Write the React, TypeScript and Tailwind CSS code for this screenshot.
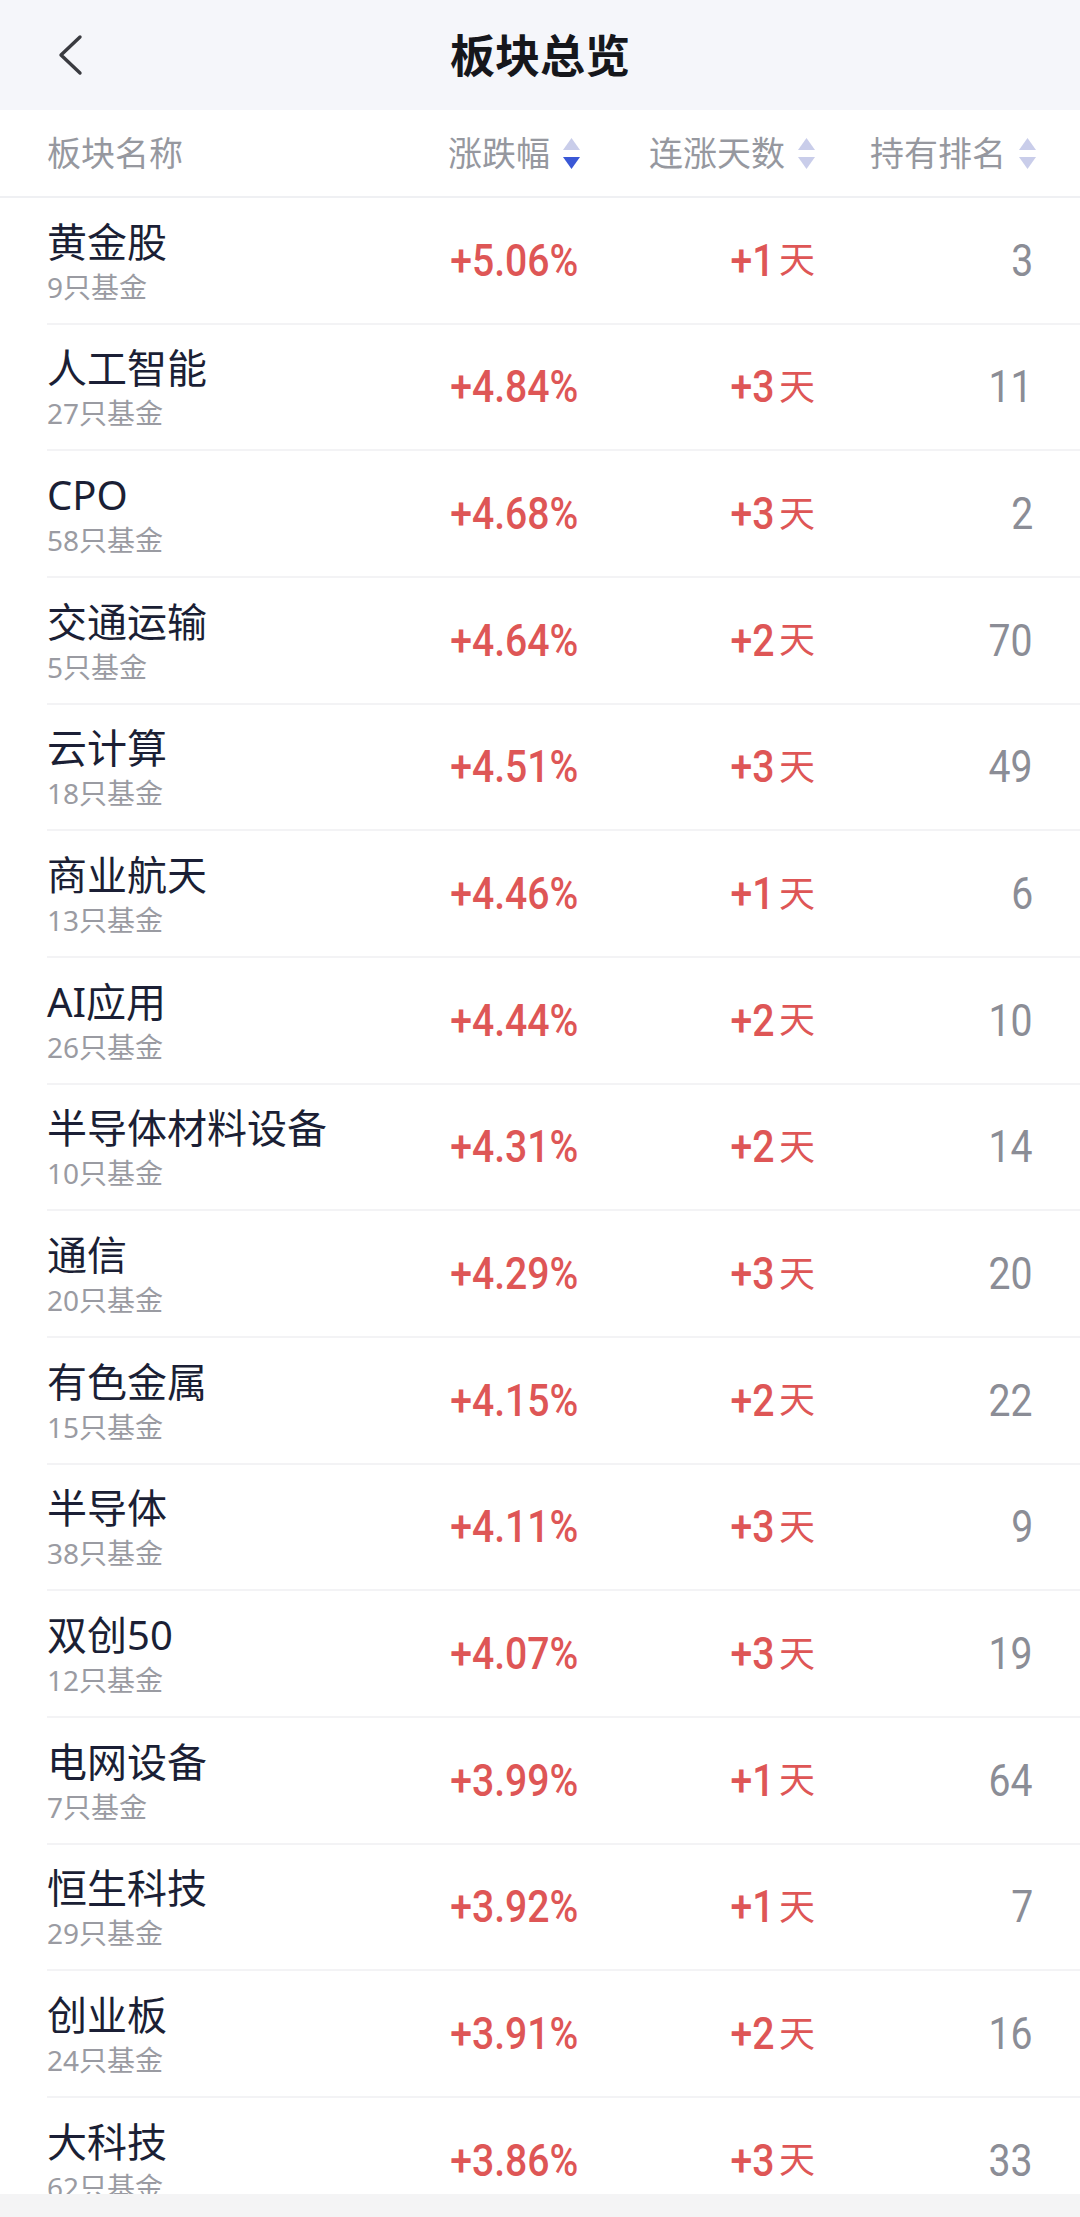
import React from "react";

type Row = { name: string; funds: number; pct: string; days: number; rank: number };

const rows: Row[] = [
  { name: "黄金股", funds: 9, pct: "+5.06%", days: 1, rank: 3 },
  { name: "人工智能", funds: 27, pct: "+4.84%", days: 3, rank: 11 },
  { name: "CPO", funds: 58, pct: "+4.68%", days: 3, rank: 2 },
  { name: "交通运输", funds: 5, pct: "+4.64%", days: 2, rank: 70 },
  { name: "云计算", funds: 18, pct: "+4.51%", days: 3, rank: 49 },
  { name: "商业航天", funds: 13, pct: "+4.46%", days: 1, rank: 6 },
  { name: "AI应用", funds: 26, pct: "+4.44%", days: 2, rank: 10 },
  { name: "半导体材料设备", funds: 10, pct: "+4.31%", days: 2, rank: 14 },
  { name: "通信", funds: 20, pct: "+4.29%", days: 3, rank: 20 },
  { name: "有色金属", funds: 15, pct: "+4.15%", days: 2, rank: 22 },
  { name: "半导体", funds: 38, pct: "+4.11%", days: 3, rank: 9 },
  { name: "双创50", funds: 12, pct: "+4.07%", days: 3, rank: 19 },
  { name: "电网设备", funds: 7, pct: "+3.99%", days: 1, rank: 64 },
  { name: "恒生科技", funds: 29, pct: "+3.92%", days: 1, rank: 7 },
  { name: "创业板", funds: 24, pct: "+3.91%", days: 2, rank: 16 },
  { name: "大科技", funds: 62, pct: "+3.86%", days: 3, rank: 33 },
];

const cjk = "font-['Noto_Sans','Noto_Sans_CJK_SC',sans-serif]";
const num = "font-['Roboto','Noto_Sans_CJK_SC',sans-serif]";

function SortArrows({ active }: { active?: "up" | "down" }) {
  return (
    <svg width="17" height="31" viewBox="0 0 17 31" className="shrink-0">
      <path d="M8.5 0 L17 12 L0 12 Z" fill={active === "up" ? "#3a58d6" : "#c9cdea"} />
      <path d="M0 19 L17 19 L8.5 31 Z" fill={active === "down" ? "#3a58d6" : "#c9cdea"} />
    </svg>
  );
}

function HeadCell({ label, active }: { label: string; active?: "up" | "down" }) {
  return (
    <div className="flex items-center justify-end gap-[13px]">
      <span className={`${cjk} text-[34px] leading-none text-[#96989f]`}>{label}</span>
      <SortArrows active={active} />
    </div>
  );
}

export default function App() {
  return (
    <div className="w-[1080px] h-[2217px] flex flex-col overflow-hidden bg-white">
      {/* Top bar */}
      <div className="h-[110px] shrink-0 bg-[#f5f6fa] grid grid-cols-[1fr_auto_1fr] items-center">
        <div className="pl-[56px] flex items-center">
          <svg width="28" height="42" viewBox="0 0 28 42" fill="none">
            <path d="M24 3 L5 21 L24 39" stroke="#3a3b40" strokeWidth="3.4" strokeLinecap="round" strokeLinejoin="round" />
          </svg>
        </div>
        <h1 className={`${cjk} text-[45px] font-bold text-[#16171c] leading-none`}>板块总览</h1>
        <div />
      </div>

      {/* Column header */}
      <div className="h-[88px] shrink-0 border-b-2 border-[#eff0f3] pl-[47px] pr-[44px] grid grid-cols-[1fr_235px_235px_221px] items-center">
        <span className={`${cjk} text-[34px] leading-none text-[#96989f]`}>板块名称</span>
        <HeadCell label="涨跌幅" active="down" />
        <HeadCell label="连涨天数" />
        <HeadCell label="持有排名" />
      </div>

      {/* List */}
      <div className="flex-1 overflow-hidden">
        {rows.map((r) => (
          <div key={r.name} className="h-[126.67px] pl-[47px]">
            <div className="h-full border-b-2 border-[#f3f3f5] pr-[47px] grid grid-cols-[1fr_233px_237px_218px] items-center">
              <div className="flex flex-col pt-[3px]">
                <span className={`${cjk} text-[40px] leading-[46px] text-[#1b1f35]`}>{r.name}</span>
                <span className={`${cjk} text-[28px] leading-[36px] mt-[4px] text-[#9a9ba2]`}>{r.funds}只基金</span>
              </div>
              <div className="flex justify-end">
                <span className={`${num} inline-block origin-right scale-x-[0.87] text-[45px] font-medium leading-none text-[#de5656]`}>{r.pct}</span>
              </div>
              <div className="flex justify-end items-center">
                <span className={`${num} inline-block origin-right scale-x-[0.87] text-[45px] font-medium leading-none text-[#de5656]`}>+{r.days}</span>
                <span className={`${cjk} ml-[4px] text-[36px] leading-none text-[#de5656]`}>天</span>
              </div>
              <div className="flex justify-end">
                <span className={`${num} inline-block origin-right scale-x-[0.87] text-[45px] leading-none text-[#8b8d96]`}>{r.rank}</span>
              </div>
            </div>
          </div>
        ))}
      </div>

      {/* Bottom bar */}
      <div className="h-[23px] shrink-0 bg-[#f4f4f5]" />
    </div>
  );
}
